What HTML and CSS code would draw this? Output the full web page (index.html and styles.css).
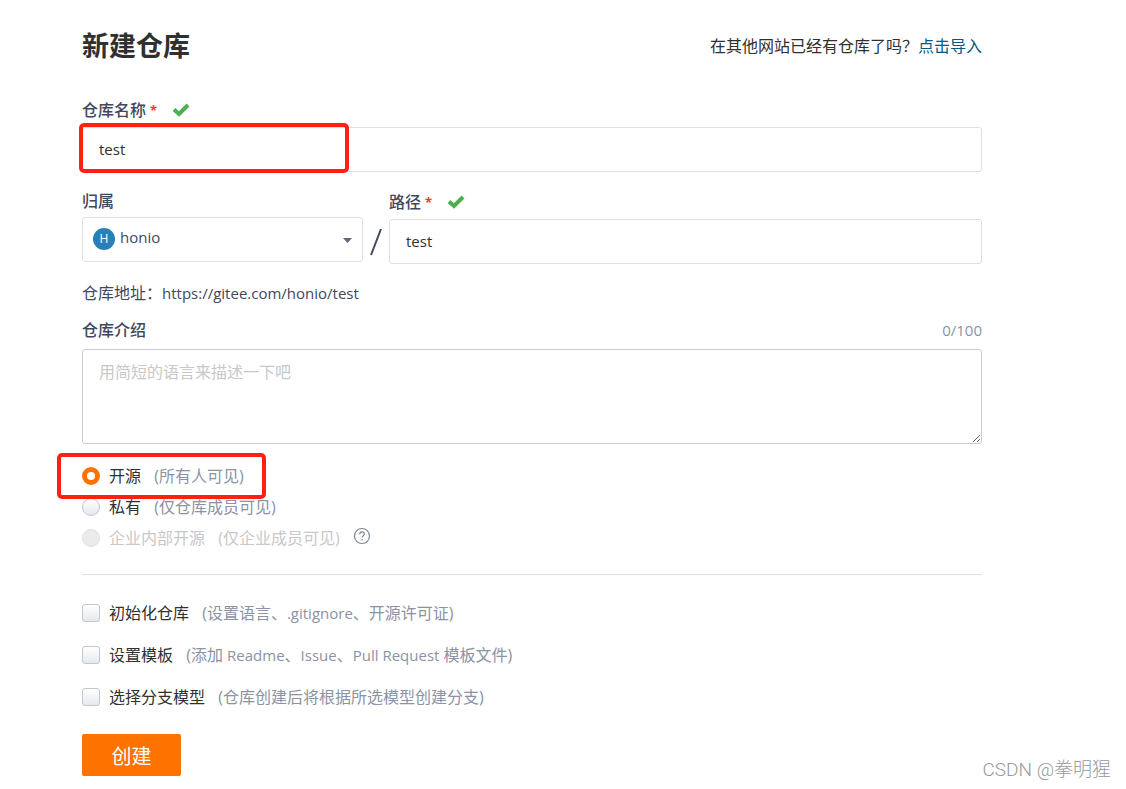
FILE: index.html
```html
<!DOCTYPE html>
<html lang="zh-CN">
<head>
    <meta charset="UTF-8">
    <title>新建仓库</title>
    <link rel="stylesheet" href="styles.css">
</head>
<body>
    <main class="container">
        <header class="page-header">
            <h1>新建仓库</h1>
            <p class="import">在其他网站已经有仓库了吗？<a href="#import">点击导入</a></p>
        </header>

        <form action="#" method="post">
            <div class="field">
                <div class="label-row required">
                    <label for="name">仓库名称</label>
                    <span class="star">*</span>
                    <svg class="check" width="18" height="14" viewBox="0 0 18 14"><path d="M2 6.500l5 4.500L16 2" /></svg>
                </div>
                <div class="marked mark-name">
                    <input type="text" id="name" name="name" value="test">
                </div>
            </div>

            <div class="path-row">
                <div class="owner">
                    <div class="label-row"><label for="owner">归属</label></div>
                    <div class="select">
                        <span class="avatar">H</span>
                        <select id="owner" name="owner">
                            <option>honio</option>
                        </select>
                        <svg class="caret" width="9" height="5" viewBox="0 0 9 5"><path d="M0 0h9L4.500 5z" /></svg>
                    </div>
                </div>
                <svg class="slash" width="12" height="28" viewBox="0 0 12 28"><path d="M11 1L1 27" /></svg>
                <div class="path">
                    <div class="label-row required">
                        <label for="path">路径</label>
                        <span class="star">*</span>
                        <svg class="check" width="18" height="14" viewBox="0 0 18 14"><path d="M2 6.500l5 4.500L16 2" /></svg>
                    </div>
                    <input type="text" id="path" name="path" value="test">
                </div>
            </div>

            <p class="address">仓库地址：<span class="latin">https://gitee.com/honio/test</span></p>

            <div class="intro">
                <div class="label-row">
                    <label for="intro">仓库介绍</label>
                    <span class="count latin">0/100</span>
                </div>
                <textarea id="intro" name="intro" placeholder="用简短的语言来描述一下吧"></textarea>
            </div>

            <div class="radios">
                <div class="option marked mark-public">
                    <input type="radio" id="public" name="visibility" checked>
                    <label for="public">开源 <span class="hint">(所有人可见)</span></label>
                </div>
                <div class="option">
                    <input type="radio" id="private" name="visibility">
                    <label for="private">私有 <span class="hint">(仅仓库成员可见)</span></label>
                </div>
                <div class="option disabled">
                    <input type="radio" id="inner" name="visibility" disabled>
                    <label for="inner">企业内部开源 <span class="hint">(仅企业成员可见)</span></label>
                    <svg class="help" width="18" height="18" viewBox="0 0 18 18">
                        <circle cx="9" cy="9" r="7.500" />
                        <path d="M6.800 7.200c0-3 4.600-2.900 4.600-.2 0 1.700-2.300 1.700-2.300 3.600M9.100 12v1.400" />
                    </svg>
                </div>
            </div>

            <div class="checks">
                <div class="option">
                    <input type="checkbox" id="init" name="init">
                    <label for="init">初始化仓库 <span class="hint">(设置语言、<span class="latin">.gitignore</span>、开源许可证)</span></label>
                </div>
                <div class="option">
                    <input type="checkbox" id="template" name="template">
                    <label for="template">设置模板 <span class="hint">(添加 <span class="latin">Readme</span>、<span class="latin">Issue</span>、<span class="latin">Pull Request</span> 模板文件)</span></label>
                </div>
                <div class="option">
                    <input type="checkbox" id="branch" name="branch">
                    <label for="branch">选择分支模型 <span class="hint">(仓库创建后将根据所选模型创建分支)</span></label>
                </div>
            </div>

            <button type="submit">创建</button>
        </form>
    </main>
    <div class="watermark">CSDN @拳明猩</div>
</body>
</html>
```

FILE: styles.css
```css
*,
*::after {
    box-sizing: border-box;
}
body {
    margin: 0;
    background: #fff;
    color: #40485b;
    font-family: "Open Sans", "Noto Sans CJK SC", sans-serif;
    font-size: 16px;
    line-height: 20px;
}
.container {
    max-width: 1044px;
    padding: 26px 62px 0 82px;
}
.page-header,
form {
    max-width: 900px;
}
.page-header {
    display: flex;
    justify-content: space-between;
    align-items: center;
    margin-bottom: 33px;
}
h1 {
    margin: 0;
    color: #303030;
    font-size: 27px;
    line-height: 40px;
}
p {
    margin: 0;
}
.import {
    color: #303030;
}
a {
    color: #005980;
    text-decoration: none;
}
.latin {
    font-size: 15px;
}

/* labels */
.label-row {
    display: flex;
    align-items: center;
    height: 20px;
    margin-bottom: 6px;
    font-weight: 500;
}
.label-row.required {
    height: 22px;
}
.star {
    margin-left: 4px;
    color: #f33;
    font-size: 13px;
    font-weight: 700;
}
.check {
    margin-left: 15px;
    fill: none;
    stroke: #4caf50;
    stroke-width: 4;
}

/* text fields */
input[type="text"],
select,
textarea {
    display: block;
    width: 100%;
    height: 45px;
    padding: 0 16px 2px;
    border: 1px solid #dce0e6;
    border-radius: 3px;
    outline: none;
    background: #fff;
    color: #303030;
    font-family: inherit;
    font-size: 15px;
}
.field {
    margin-bottom: 19px;
}
.path-row {
    display: grid;
    grid-template-columns: 281px 26px 1fr;
    margin-bottom: 19px;
}
.select {
    position: relative;
}
select {
    appearance: none;
    padding: 0 36px 6px 37px;
    color: #40485b;
}
.avatar {
    position: absolute;
    top: 11px;
    left: 11px;
    width: 22px;
    height: 22px;
    border-radius: 50%;
    background: #2980b9;
    color: #fff;
    font-size: 12px;
    line-height: 22px;
    text-align: center;
}
.caret {
    position: absolute;
    top: 21px;
    right: 11px;
    fill: #60687b;
}
.slash {
    align-self: end;
    justify-self: center;
    margin-bottom: 8px;
    fill: none;
    stroke: #40485b;
    stroke-width: 2;
}
.address {
    margin-bottom: 17px;
}
.intro .label-row {
    justify-content: space-between;
    margin-bottom: 9px;
}
.count {
    color: #8c92a4;
    font-weight: 400;
}
textarea {
    height: 95px;
    padding: 12px 16px;
    border-color: #c8cad8;
    font-size: 16px;
    line-height: 20px;
}
textarea::placeholder {
    color: #c8c8c8;
}

/* options */
.radios {
    padding: 16px 0 21px;
    border-bottom: 1px solid #dce0e6;
}
.option {
    display: flex;
    align-items: center;
    height: 31px;
    color: #303030;
}
.checks {
    padding: 17px 0 16px;
}
.checks .option {
    height: 42px;
}
.option input {
    appearance: none;
    width: 18px;
    height: 18px;
    margin: 0 9px 0 0;
    border: 1px solid #c4c6cd;
    border-radius: 3px;
    background: linear-gradient(#fff, #e6e8f0);
}
.option input[type="radio"] {
    border-radius: 50%;
}
.option input[type="radio"]:checked {
    border: 5px solid #fe7300;
    background: #fff;
}
.option input:disabled {
    border-color: #e0e0e0;
    background: #ebebeb;
}
.hint {
    margin-left: 9px;
    color: #8c92a4;
}
.disabled,
.disabled .hint {
    color: #c8c8c8;
}
.help {
    margin: 0 0 4px 13px;
    fill: none;
    stroke: #7c8696;
    stroke-width: 1.2;
}

/* red frames around the filled-in values */
.marked {
    position: relative;
}
.marked::after {
    content: "";
    position: absolute;
    border: 4px solid #ff2012;
    border-radius: 5px;
    pointer-events: none;
}
.mark-name::after {
    top: -4px;
    left: -3px;
    width: 270px;
    height: 50px;
}
.mark-public::after {
    top: -7px;
    left: -25px;
    width: 209px;
    height: 46px;
}

button {
    display: block;
    width: 99px;
    height: 42px;
    padding: 0;
    border: none;
    border-radius: 2px;
    background: #fe7300;
    color: #fff;
    font-family: inherit;
    font-size: 20px;
    cursor: pointer;
}
.watermark {
    position: absolute;
    right: 15px;
    bottom: 8px;
    color: #999;
    font-family: Roboto, "Noto Sans CJK SC", sans-serif;
    font-size: 19px;
    font-weight: 300;
    line-height: 22px;
}
```
